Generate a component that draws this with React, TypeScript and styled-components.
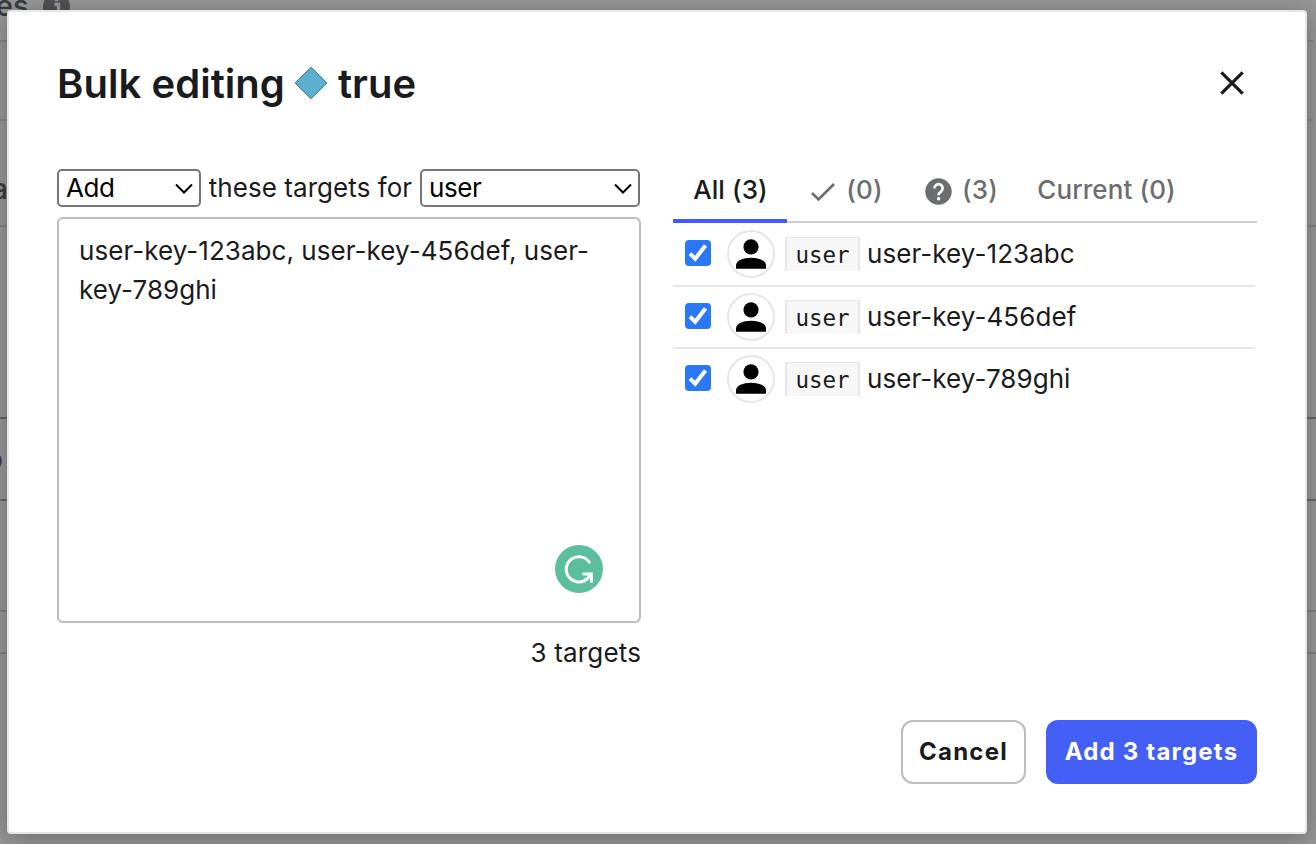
import React from "react";
import styled, { createGlobalStyle } from "styled-components";

const Global = createGlobalStyle`
  *, *::before, *::after { box-sizing: border-box; }
  html, body { margin: 0; padding: 0; overflow: hidden; }
  body { font-family: Inter, "Liberation Sans", sans-serif; font-size: 26px; color: #1a1b1d; background: #979797; }
`;

const Stage = styled.div`
  position: relative;
  width: 1316px;
  height: 844px;
  overflow: hidden;
  background: #979797;
`;

const Backdrop = styled.div`
  display: flex;
  flex-direction: column;
  height: 844px;
  color: #3a3b3d;
  font-size: 28px;
`;

const Line = styled.div<{ $h: number; $color: string; $inset?: number }>`
  flex: none;
  height: ${(p) => p.$h}px;
  margin-right: ${(p) => p.$inset ?? 0}px;
  border-bottom: 2px solid ${(p) => p.$color};
  display: flex;
  align-items: center;
  white-space: nowrap;
`;

const Heading = styled.span`
  font-size: 29px;
  font-weight: 500;
  line-height: 32px;
  margin: -28px 0 0 -4px;
  display: flex;
  gap: 14px;
  align-items: center;
  svg { margin-top: 0; }
`;

const Edge = styled.span<{ $shift: number; $drop?: number }>`
  margin-left: ${(p) => p.$shift}px;
  padding-top: ${(p) => p.$drop ?? 0}px;
  font-weight: 500;
`;

const Modal = styled.div`
  position: absolute;
  left: 7px;
  top: 10px;
  width: 1300px;
  height: 824px;
  background: #fff;
  border: 2px solid #e6e6e6;
  border-radius: 4px;
  box-shadow: 0 4px 24px rgba(0, 0, 0, 0.3);
  padding: 40px 48px 48px;
  display: flex;
  flex-direction: column;
`;

const Header = styled.header`
  display: flex;
  align-items: center;
  justify-content: space-between;
  height: 62px;
  margin-bottom: 55px;
  padding-right: 10px;
`;

const Title = styled.h1`
  margin: 0;
  font-size: 40px;
  font-weight: 600;
  line-height: 62px;
  letter-spacing: 0.05px;
  display: flex;
  align-items: center;
  gap: 9px;
  padding-top: 1px;
  svg { margin: -1px 1px 0 0; }
`;

const Close = styled.button`
  border: 0;
  background: none;
  padding: 0;
  width: 30px;
  height: 30px;
  display: flex;
  svg { display: block; }
`;

const Columns = styled.div`
  display: grid;
  grid-template-columns: 584px 584px;
  gap: 32px;
  height: 507px;
`;

const Editor = styled.section`
  display: flex;
  flex-direction: column;
`;

const Sentence = styled.div`
  display: flex;
  align-items: center;
  height: 38px;
  margin-bottom: 10px;
`;

const Connector = styled.span`
  width: 219px;
  padding-bottom: 1px;
  letter-spacing: 0.06px;
  text-align: center;
  white-space: nowrap;
`;

const Picker = styled.div<{ $w: number }>`
  flex: none;
  width: ${(p) => p.$w}px;
  height: 38px;
  border: 2px solid #767676;
  border-radius: 5px;
  padding: 0 5px 1px 7px;
  display: flex;
  align-items: center;
  justify-content: space-between;
  color: #000;
  letter-spacing: -0.4px;
`;

const Area = styled.div`
  height: 406px;
  border: 2px solid #bdbdbd;
  border-radius: 6px;
  padding: 12px 36px 28px 20px;
  line-height: 39px;
  letter-spacing: 0.05px;
  display: flex;
  flex-direction: column;
  justify-content: space-between;
`;

const Badge = styled.span`
  align-self: flex-end;
  width: 48px;
  height: 48px;
  svg { display: block; }
`;

const Count = styled.div`
  text-align: right;
  line-height: 40px;
  margin-top: 10px;
  letter-spacing: 0.15px;
`;

const Results = styled.section`
  display: flex;
  flex-direction: column;
`;

const Tabs = styled.nav`
  display: flex;
  height: 54px;
  border-bottom: 2px solid #cfcfcf;
`;

const Tab = styled.div<{ $active?: boolean; $w: number }>`
  width: ${(p) => p.$w}px;
  height: 54px;
  padding: 0 0 10px 1px;
  border-bottom: 4px solid ${(p) => (p.$active ? "#405bff" : "transparent")};
  color: ${(p) => (p.$active ? "#1a1b1d" : "#6c6d71")};
  font-weight: 500;
  letter-spacing: 0.1px;
  display: flex;
  align-items: center;
  justify-content: center;
  gap: 10px;
  white-space: nowrap;
  svg { display: block; margin-top: 5px; }
`;

const Row = styled.div<{ $h: number; $last?: boolean }>`
  height: ${(p) => p.$h}px;
  width: 582px;
  border-bottom: 2px solid ${(p) => (p.$last ? "transparent" : "#e6e6e6")};
  padding: 0 0 0 12px;
  display: flex;
  align-items: center;
`;

const Check = styled.span`
  width: 26px;
  height: 26px;
  border-radius: 4px;
  background: #2b78f7;
  margin: -2px 16px 0 0;
  svg { display: block; }
`;

const Avatar = styled.span`
  width: 48px;
  height: 48px;
  border-radius: 50%;
  border: 2px solid #e6e6e6;
  margin-right: 10px;
  svg { display: block; }
`;

const Kind = styled.code`
  width: 75px;
  height: 34px;
  background: #f7f7f7;
  border: 2px solid #e6e6e6;
  border-top-width: 1px;
  border-bottom: 0;
  border-radius: 2px 2px 0 0;
  font-family: "DejaVu Sans Mono", "Liberation Mono", monospace;
  font-size: 22.5px;
  line-height: 35px;
  text-align: center;
  margin-right: 7px;
`;

const Key = styled.span`
  letter-spacing: 0.07px;
  padding-bottom: 1px;
  white-space: nowrap;
`;

const Footer = styled.footer`
  display: flex;
  justify-content: flex-end;
  gap: 20px;
  margin-top: 44px;
`;

const Button = styled.button<{ $primary?: boolean; $w: number }>`
  width: ${(p) => p.$w}px;
  height: 64px;
  border-radius: 12px;
  border: 2px solid ${(p) => (p.$primary ? "#435ff6" : "#bdbdbd")};
  background: ${(p) => (p.$primary ? "#435ff6" : "#fff")};
  color: ${(p) => (p.$primary ? "#fff" : "#1a1b1d")};
  font: 700 24px Inter, sans-serif;
  letter-spacing: 1.2px;
  padding: 0 0 2px;
  white-space: nowrap;
`;

const Chevron = () => (
  <svg width="20" height="14" viewBox="0 0 20 14" fill="none" stroke="currentColor" strokeWidth="2">
    <path d="M2 3.5l8 8L18 3.5" />
  </svg>
);

const Person = () => (
  <svg width="44" height="44" viewBox="0 0 44 44">
    <circle cx="22" cy="14.8" r="7.6" />
    <path d="M7 36.7v-3.4C7 28.5 14 25.7 22 25.7s15 2.8 15 7.6v3.4z" />
  </svg>
);

const targets = ["user-key-123abc", "user-key-456def", "user-key-789ghi"];
const rowHeights = [64, 62, 62];

export default function App() {
  return (
    <Stage>
      <Global />
      <Backdrop>
        <Line $h={42} $color="#858585" $inset={3}>
          <Heading>
            es
            <svg width="27" height="27" viewBox="0 0 27 27">
              <circle cx="13.5" cy="13.5" r="13.5" fill="#505154" />
              <path d="M11.5 11.5h4v9M11.5 20h5.5M13.5 4.8v3.4" fill="none" stroke="#979797" strokeWidth="3.4" />
            </svg>
          </Heading>
        </Line>
        <Line $h={79} $color="#858585" $inset={3} />
        <Line $h={106} $color="#828282">
          <Edge $shift={-8} $drop={32}>a</Edge>
        </Line>
        <Line $h={192} $color="#666" />
        <Line $h={82} $color="#666">
          <Edge $shift={-14}>o</Edge>
        </Line>
        <Line $h={111} $color="#808080" />
        <Line $h={42} $color="#808080" />
      </Backdrop>
      <Modal role="dialog">
        <Header>
          <Title>
            Bulk editing
            <svg width="34" height="34" viewBox="0 0 34 34">
              <path d="M17 1.2L32.8 17 17 32.8 1.2 17z" fill="#5bb0cf" stroke="#346f86" strokeWidth="1" />
            </svg>
            true
          </Title>
          <Close aria-label="Close">
            <svg width="30" height="30" viewBox="0 0 30 30" stroke="#1a1b1d" strokeWidth="3.2">
              <path d="M4.3 4.3l21.4 21.4M25.7 4.3l-21.4 21.4" />
            </svg>
          </Close>
        </Header>
        <Columns>
          <Editor>
            <Sentence>
              <Picker $w={144}>
                Add
                <Chevron />
              </Picker>
              <Connector>these targets for</Connector>
              <Picker $w={220}>
                user
                <Chevron />
              </Picker>
            </Sentence>
            <Area>
              user-key-123abc, user-key-456def, user-key-789ghi
              <Badge>
                <svg width="48" height="48" viewBox="0 0 48 48" fill="none" stroke="#fff" strokeWidth="3" strokeLinecap="round">
                  <circle cx="24" cy="24" r="24" fill="#5bbf9e" stroke="none" />
                  <path d="M34.3 17.2A12.6 12.6 0 1 0 32.6 33.4L36 29.4" />
                  <path d="M28.5 29h8v7.5" strokeLinejoin="miter" />
                </svg>
              </Badge>
            </Area>
            <Count>3 targets</Count>
          </Editor>
          <Results>
            <Tabs>
              <Tab $active $w={114}>All (3)</Tab>
              <Tab $w={118}>
                <svg width="26" height="20" viewBox="0 0 26 20" fill="none" stroke="currentColor" strokeWidth="2.6">
                  <path d="M2 11l6.5 6.5L24 2" />
                </svg>
                (0)
              </Tab>
              <Tab $w={112}>
                <svg width="27" height="27" viewBox="0 0 27 27">
                  <circle cx="13.5" cy="13.5" r="13.2" fill="currentColor" />
                  <path d="M9.5 10.4a4.1 4.1 0 1 1 6.5 3.2c-1.5 1-2.4 1.7-2.4 3.6" fill="none" stroke="#fff" strokeWidth="2.6" />
                  <circle cx="13.6" cy="20.8" r="1.7" fill="#fff" />
                </svg>
                (3)
              </Tab>
              <Tab $w={178}>Current (0)</Tab>
            </Tabs>
            {targets.map((t, i) => (
              <Row key={t} $h={rowHeights[i]} $last={i === 2}>
                <Check>
                  <svg width="26" height="26" viewBox="0 0 26 26" fill="none" stroke="#fff" strokeWidth="4">
                    <path d="M5 13.6l5.2 5.2L20.5 5.5" />
                  </svg>
                </Check>
                <Avatar>
                  <Person />
                </Avatar>
                <Kind>user</Kind>
                <Key>{t}</Key>
              </Row>
            ))}
          </Results>
        </Columns>
        <Footer>
          <Button $w={125}>Cancel</Button>
          <Button $primary $w={211}>Add 3 targets</Button>
        </Footer>
      </Modal>
    </Stage>
  );
}
